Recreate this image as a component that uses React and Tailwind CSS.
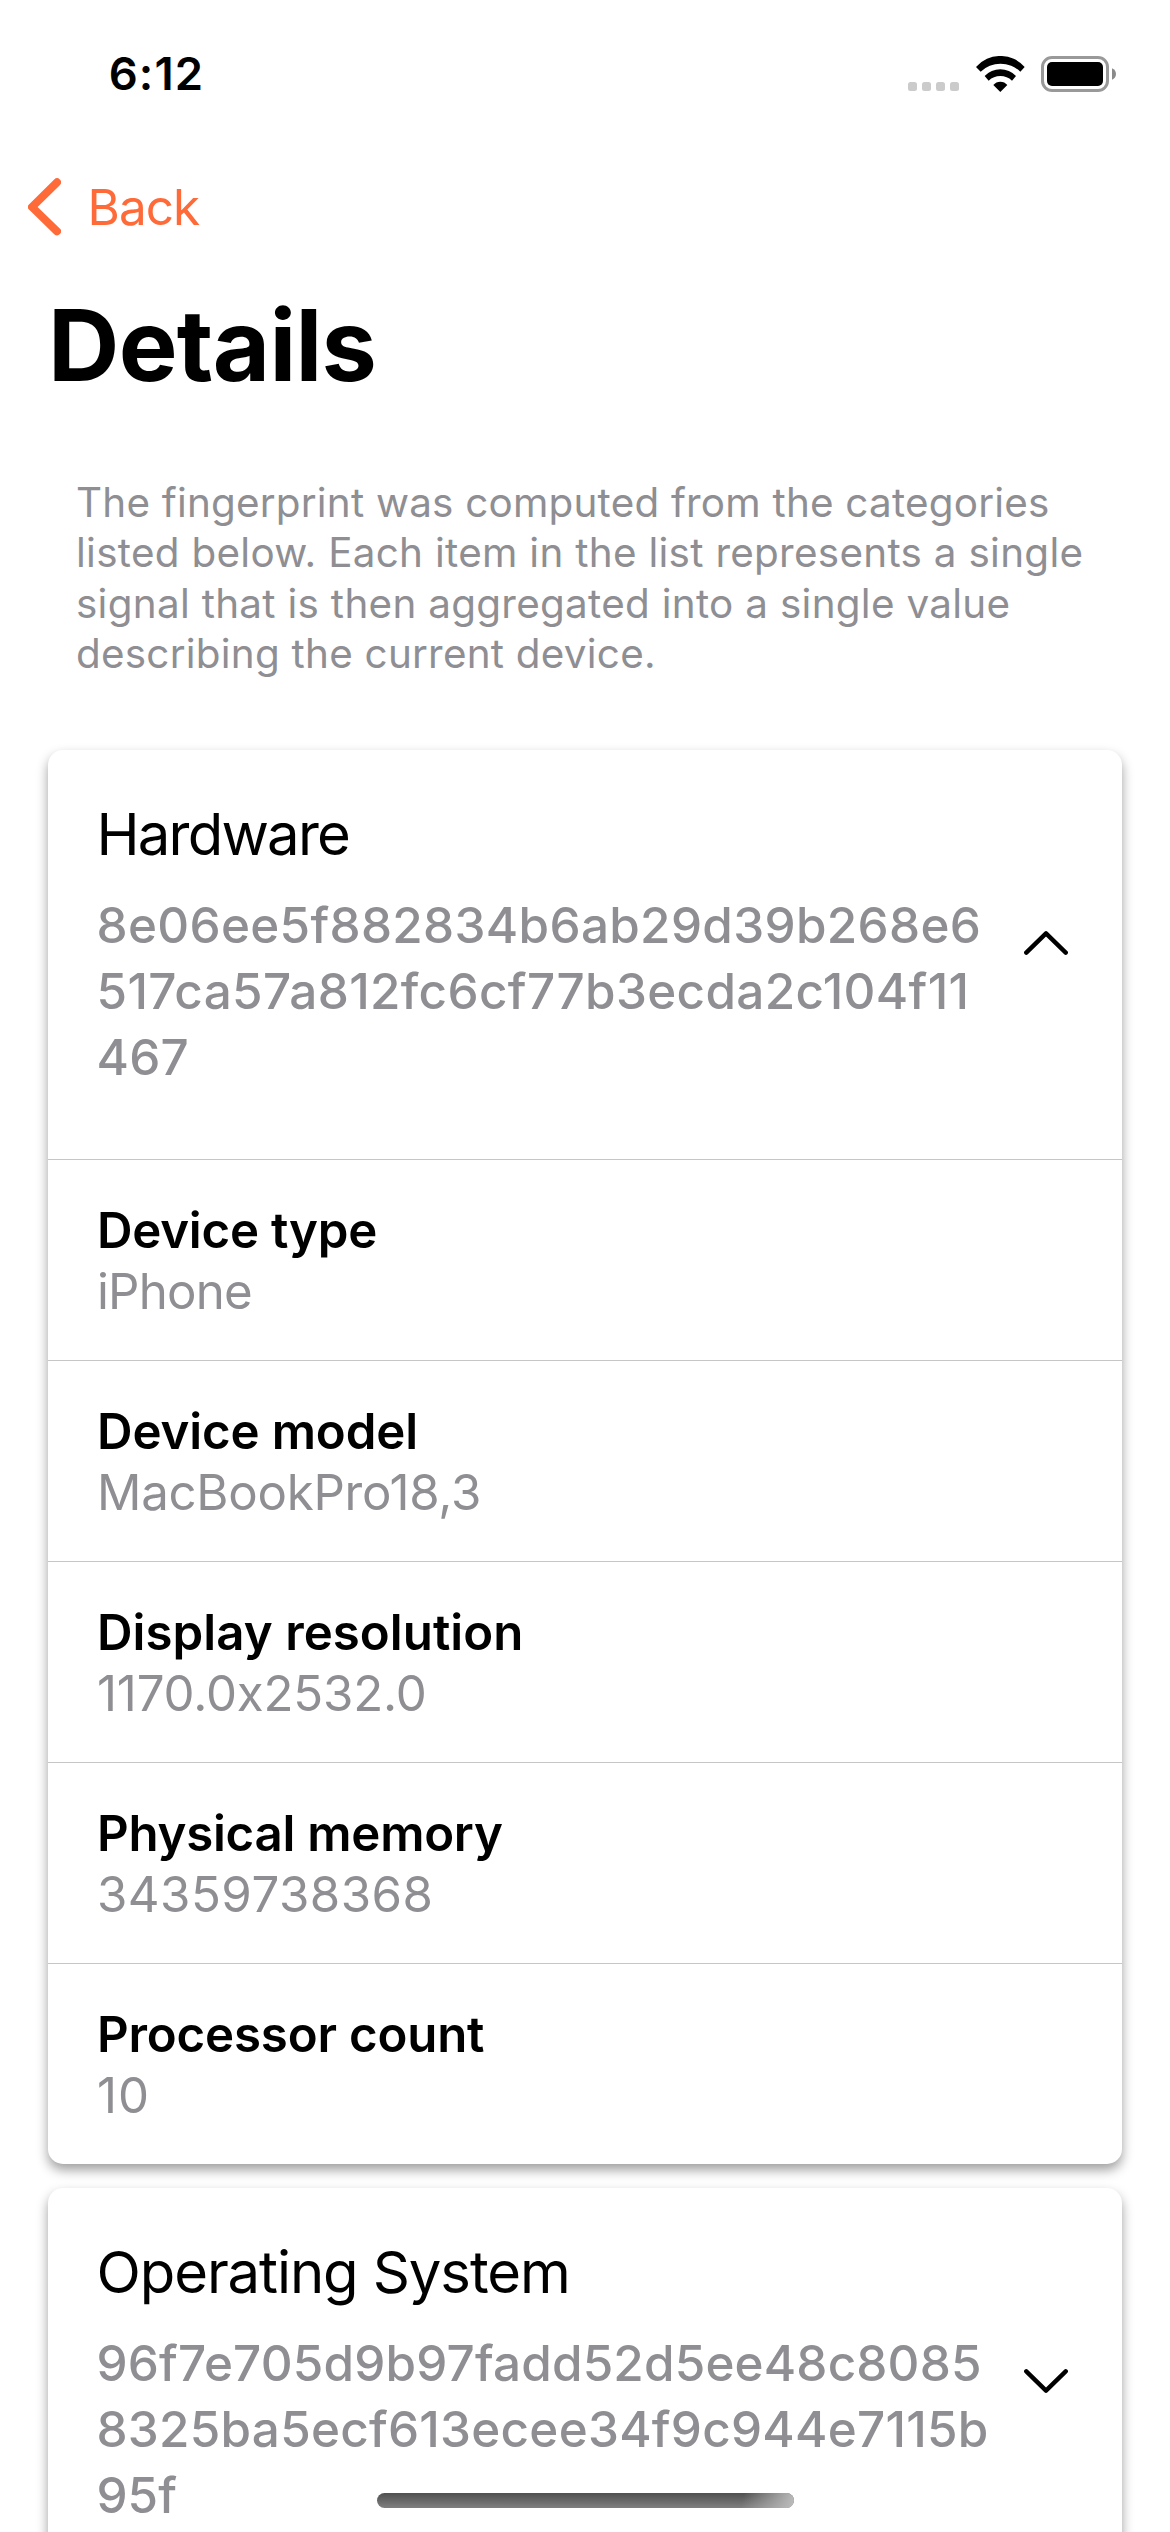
const intro = [
  { text: "The fingerprint was computed from the categories", style: "tracking-[0.22px]" },
  { text: "listed below. Each item in the list represents a single", style: "tracking-[0.3px]" },
  { text: "signal that is then aggregated into a single value", style: "tracking-[0.3px]" },
  { text: "describing the current device.", style: "tracking-[0.25px]" },
];

const hardwareHash = [
  { text: "8e06ee5f882834b6ab29d39b268e6", style: "tracking-[0.33px]" },
  { text: "517ca57a812fc6cf77b3ecda2c104f11", style: "tracking-[0.36px]" },
  { text: "467", style: "tracking-[0.24px]" },
];

const systemHash = [
  { text: "96f7e705d9b97fadd52d5ee48c8085", style: "tracking-[0.18px]" },
  { text: "8325ba5ecf613ecee34f9c944e7115b", style: "tracking-[0.26px]" },
  { text: "95f", style: "tracking-normal" },
];

const signals = [
  { label: "Device type", value: "iPhone", labelStyle: "tracking-[-0.24px]", valueStyle: "tracking-[-0.79px]" },
  { label: "Device model", value: "MacBookPro18,3", labelStyle: "tracking-[-0.13px]", valueStyle: "tracking-[-0.27px]" },
  { label: "Display resolution", value: "1170.0x2532.0", labelStyle: "tracking-[0.05px]", valueStyle: "tracking-[-0.18px]" },
  { label: "Physical memory", value: "34359738368", labelStyle: "tracking-[-0.25px]", valueStyle: "tracking-[0.48px]" },
  { label: "Processor count", value: "10", labelStyle: "tracking-[-0.18px]", valueStyle: "tracking-[0.99px]" },
];

function Lines({ lines }) {
  return lines.map((line) => (
    <span key={line.text} className={`block whitespace-nowrap ${line.style}`}>
      {line.text}
    </span>
  ));
}

function StatusBar() {
  return (
    <div className="flex h-[148px] items-center justify-between pr-[54px] pl-[108.7px]">
      <span className="text-[45.4px] leading-none font-semibold tracking-[1.1px]">6:12</span>
      <div className="flex h-9 items-start">
        <div className="mt-[26px] mr-[17px] flex gap-[5px]">
          {[0, 1, 2, 3].map((dot) => (
            <span key={dot} className="size-[9px] rounded-[2.5px] bg-[#cbcbcb]" />
          ))}
        </div>
        <svg className="mr-4 h-9 w-[49px]" viewBox="314 75 147 108" fill="#000">
          <path d="M314 108A97 97 0 0 1 460 108L447 122A86 86 0 0 0 328 122Z" />
          <path d="M340 135A65 65 0 0 1 434 135L422 149A51 51 0 0 0 352 149Z" />
          <path d="M366 162A27 27 0 0 1 408 162L387 183Z" />
        </svg>
        <svg className="h-9 w-[75px]" viewBox="0 0 75 36">
          <rect x="1.5" y="1.5" width="65" height="33" rx="9.5" fill="none" stroke="#999" strokeWidth="3" />
          <rect x="6" y="6" width="56" height="24" rx="5" fill="#000" />
          <path d="M71 12.3C73.5 13.3 75 15.5 75 18C75 20.5 73.5 22.7 71 23.7Z" fill="#8a8a8a" />
        </svg>
      </div>
    </div>
  );
}

function Chevron({ open }) {
  return (
    <svg
      className={open ? "mt-[133px] h-6 w-11 shrink-0" : "mt-[133px] h-6 w-11 shrink-0 rotate-180"}
      viewBox="0 0 44 24"
      fill="none"
      stroke="#000"
      strokeWidth="4.4"
      strokeLinecap="round"
      strokeLinejoin="round"
    >
      <path d="M2.3 21.6L22 2.4L41.7 21.6" />
    </svg>
  );
}

function Card({ title, titleStyle, hash, open, children }) {
  return (
    <section className="rounded-[15px] bg-white shadow-[0_6px_12px_rgba(0,0,0,0.38)]">
      <div className="flex h-[409px] items-start justify-between pt-12 pr-[54.5px] pl-[48.5px]">
        <div>
          <h2 className={`text-[58px] leading-[72px] font-normal whitespace-nowrap ${titleStyle}`}>{title}</h2>
          <p className="mt-[22px] text-[49.4px] leading-[66px] font-medium text-[#8e8e93]">
            <Lines lines={hash} />
          </p>
        </div>
        <Chevron open={open} />
      </div>
      {children}
    </section>
  );
}

export default function App() {
  return (
    <div className="relative h-[2532px] w-[1170px] overflow-hidden bg-white font-[Inter,sans-serif] text-black [font-feature-settings:'calt'_0]">
      <StatusBar />
      <div className="flex h-[118px] items-center text-[#ff6a39]">
        <svg className="ml-7 h-[58px] w-[33px]" viewBox="0 0 33 58" fill="none" stroke="currentColor" strokeWidth="8" strokeLinecap="round" strokeLinejoin="round">
          <path d="M29 4.3L4 29L29 53.3" />
        </svg>
        <span className="mt-0.5 ml-[26.5px] text-[49.4px] leading-none tracking-[-0.9px]">Back</span>
      </div>
      <h1 className="mt-[19px] ml-12 text-[98.8px] leading-[120px] font-bold tracking-[-0.7px]">Details</h1>
      <p className="mt-[73px] ml-[76px] h-[201px] text-[40.4px] leading-[50.4px] text-[#8e8e93]">
        <Lines lines={intro} />
      </p>
      <main className="mt-[71px] flex flex-col gap-6 px-12">
        <Card title="Hardware" titleStyle="tracking-[-1.78px]" hash={hardwareHash} open>
          {signals.map((signal) => (
            <div key={signal.label} className="border-t border-[#c6c6c8] pt-10 pb-[38px] pl-[49px] text-[49.2px] leading-[61px]">
              <div className={`font-semibold ${signal.labelStyle}`}>{signal.label}</div>
              <div className={`text-[#8e8e93] ${signal.valueStyle}`}>{signal.value}</div>
            </div>
          ))}
        </Card>
        <Card title="Operating System" titleStyle="tracking-[-1.1px]" hash={systemHash} />
      </main>
      <div className="absolute top-[2493px] left-[377px] h-[15px] w-[417px] overflow-hidden rounded-full bg-linear-to-b from-[#505050] to-[#808080]">
        <div className="ml-auto h-full w-14 bg-linear-[100deg] from-transparent from-10% to-[#bdbdbd]" />
      </div>
    </div>
  );
}
